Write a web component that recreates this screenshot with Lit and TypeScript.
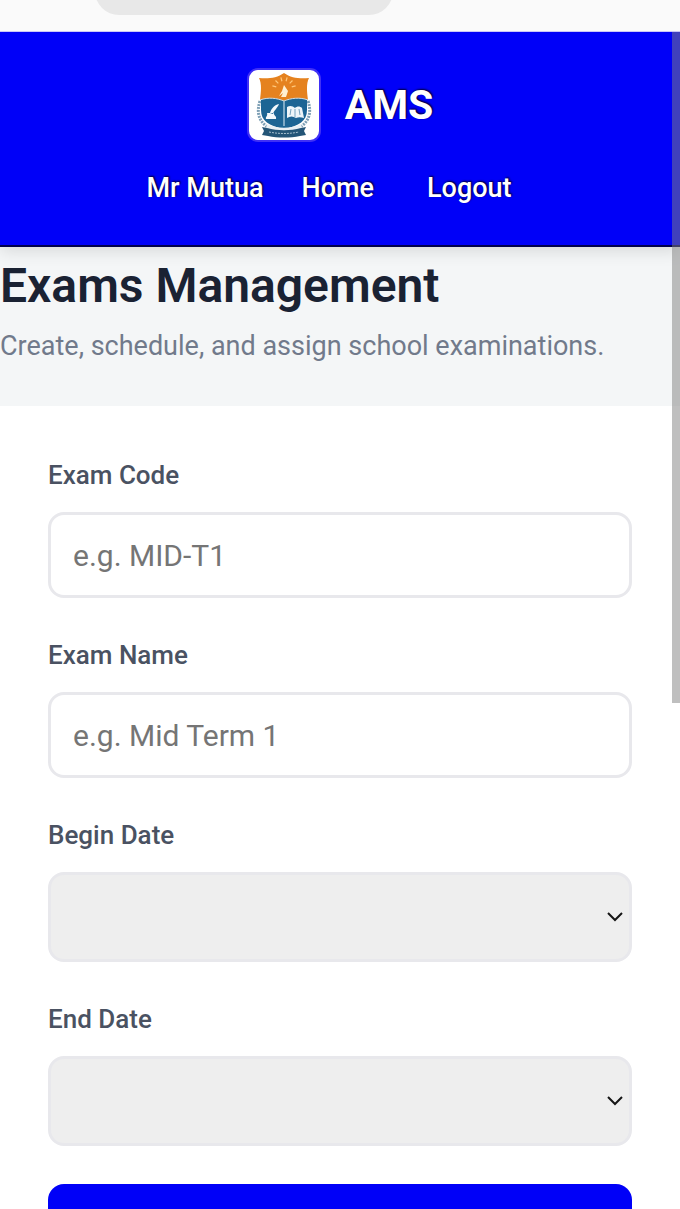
import { css, html, LitElement, svg } from 'lit';

const fields = [
  { id: 'exam-code', label: 'Exam Code', kind: 'text', placeholder: 'e.g. MID-T1' },
  { id: 'exam-name', label: 'Exam Name', kind: 'text', placeholder: 'e.g. Mid Term 1' },
  { id: 'begin-date', label: 'Begin Date', kind: 'date', placeholder: '' },
  { id: 'end-date', label: 'End Date', kind: 'date', placeholder: '' },
];

export class SchoolCrest extends LitElement {
  static styles = css`
    :host {
      display: block;
      box-sizing: border-box;
      width: 74px;
      height: 74px;
      border: 2px solid #4030f5;
      border-radius: 11px;
      background: #fff;
    }

    svg {
      display: block;
      width: 100%;
      height: 100%;
    }
  `;

  // one ray of the sun above the torch
  #ray(angle: number) {
    return svg`<path d="M35 11v-4" transform="rotate(${angle} 35 19)" stroke="#ffc77a" stroke-width="1.2" />`;
  }

  render() {
    return html`
      <svg viewBox="0 0 70 70" fill="none" role="img" aria-label="School crest">
        <path d="M11 31c-4 12-1 22 11 28M59 31c4 12 1 22-11 28" stroke="#7d9fb5" stroke-width="3" stroke-dasharray="2 1" />
        <path d="M12 28v12c0 11 8 16 23 19 15-3 23-8 23-19V28l-23-2z" fill="#1d6594" />
        <path d="M10 8c9 1 18 0 25-5 7 5 16 6 25 5-3 6-2 14-1 22-8-3-17-2-24 1-7-3-16-4-24-1 1-8 2-16-1-22z" fill="#e5821f" />
        <path d="M11 30c8-3 17-2 24 1 7-3 16-4 24-1" stroke="#c9dce8" stroke-width="1" />
        <path d="M35 31v25" stroke="#a9c8dc" stroke-width="1.4" />
        ${[-75, -45, -15, 15, 45, 75].map((angle) => this.#ray(angle))}
        <path d="M35 15l4 6-2 6h-5l2-4-4 3 3-5z" fill="#fff0d2" />
        <path d="M30 34c-5 1-8 5-9 9l3 1c1-4 4-5 6-10zM18 43h7c-1 2 3 3 2 6H17c-1-2 2-3 1-6z" fill="#f4f9fc" />
        <path d="M38 48V37c3-2 6-1 8 1 2-2 5-2 7 0l2 10c-3-1-6-1-8 0-3-2-6-2-9 0z" fill="#eef5f9" />
        <path d="M46 39v8M42 39l-1 6M50 39l1 6" stroke="#76a3bf" stroke-width="1" />
        <path d="M18 54c10 5 24 5 34 0l1 4c-11 4-25 4-36 0z" fill="#e9f0f4" />
        <path d="M13 57l5 1c11 3 23 3 34 0l5-1-2 4 2 4-6 1c-10 2-22 2-32 0l-6-1 2-4z" fill="#245577" />
        <path d="M20 62c10 2 20 2 30 0" stroke="#a7c0cf" stroke-width="1" stroke-dasharray="2 1" />
      </svg>
    `;
  }
}

customElements.define('school-crest', SchoolCrest);

export class AppRoot extends LitElement {
  static styles = css`
    :host {
      display: flex;
      flex-direction: column;
      position: relative;
      height: 100vh;
      overflow: hidden;
      background: #fff;
      font-family: Roboto, 'Liberation Sans', sans-serif;
    }

    *,
    *::before,
    *::after {
      box-sizing: border-box;
    }

    .browser-bar {
      display: flex;
      flex: none;
      align-items: flex-end;
      height: 32px;
      padding: 0 0 16px 14%;
      border-bottom: 1px solid #c9c5f7;
      background: #fafafa;
    }

    .address {
      flex: none;
      width: 51%;
      height: 48px;
      border-radius: 24px;
      background: #e8e8e8;
    }

    .page {
      position: relative;
      flex: 1;
      min-height: 0;
      overflow: hidden;
    }

    .scroll-thumb {
      position: absolute;
      top: 0;
      right: 0;
      z-index: 2;
      width: 8px;
      height: 57%;
      background: rgb(128 128 128 / 50%);
    }

    .header {
      display: flex;
      flex-direction: column;
      align-items: center;
      gap: 26px;
      position: relative;
      padding: 36px 16px 37px;
      border-bottom: 2px solid #00004d;
      background: #0000f8;
      box-shadow: 0 4px 16px rgb(0 0 0 / 12%);
      color: #fff;
      text-shadow: 1px -1px 2px rgb(0 0 0 / 80%);
    }

    .brand {
      display: flex;
      align-items: center;
      gap: 24px;
      font-size: 41px;
      font-weight: 700;
      line-height: 48px;
    }

    .nav {
      display: flex;
      gap: 38px;
      font-size: 27px;
      font-weight: 500;
      line-height: 40px;
    }

    .nav a {
      color: inherit;
      text-decoration: none;
    }

    .logout {
      padding: 0 22px 0 15px;
    }

    .intro {
      padding: 10px 0 41px;
      background: #f4f6f7;
    }

    h1 {
      margin: 0;
      color: #1a2233;
      font-size: 48px;
      font-weight: 600;
      line-height: 58px;
    }

    .intro p {
      margin: 12px 0 0;
      color: #717a8b;
      font-size: 27px;
      line-height: 38px;
    }

    .form {
      display: grid;
      gap: 38px;
      padding: 50px 48px;
    }

    .field {
      display: grid;
      gap: 18px;
    }

    label {
      color: #4a5262;
      font-size: 26px;
      font-weight: 500;
      line-height: 38px;
    }

    input,
    select {
      width: 100%;
      border: 3px solid #e8e8ec;
      border-radius: 16px;
      font: inherit;
      font-size: 30px;
    }

    input {
      height: 86px;
      padding: 0 22px;
      background: #fff;
    }

    input::placeholder {
      color: #757575;
      opacity: 1;
    }

    .picker {
      display: grid;
      align-items: center;
    }

    .picker > * {
      grid-area: 1 / 1;
    }

    select {
      height: 90px;
      padding: 0 48px 0 22px;
      appearance: none;
      background: #eee;
    }

    .chevron {
      justify-self: end;
      width: 18px;
      height: 12px;
      margin-right: 8px;
      pointer-events: none;
    }

    .submit {
      height: 86px;
      border: 0;
      border-radius: 16px;
      background: #0000f8;
    }
  `;

  #renderControl(field: (typeof fields)[number]) {
    if (field.kind === 'text') {
      return html`<input id=${field.id} type="text" placeholder=${field.placeholder} />`;
    }

    return html`
      <div class="picker">
        <select id=${field.id}></select>
        <svg class="chevron" viewBox="0 0 18 12" fill="none" aria-hidden="true">
          <path d="M2 2l7 7 7-7" stroke="#151515" stroke-width="2" />
        </svg>
      </div>
    `;
  }

  render() {
    return html`
      <div class="browser-bar"><div class="address"></div></div>
      <div class="page">
        <div class="scroll-thumb"></div>
        <header class="header">
          <div class="brand">
            <school-crest></school-crest>
            <span>AMS</span>
          </div>
          <nav class="nav">
            <span>Mr Mutua</span>
            <a href="#home">Home</a>
            <a class="logout" href="#logout">Logout</a>
          </nav>
        </header>
        <main>
          <section class="intro">
            <h1>Exams Management</h1>
            <p>Create, schedule, and assign school examinations.</p>
          </section>
          <form class="form">
            ${fields.map(
              (field) => html`
                <div class="field">
                  <label for=${field.id}>${field.label}</label>
                  ${this.#renderControl(field)}
                </div>
              `,
            )}
            <button class="submit" type="button" aria-label="Save exam"></button>
          </form>
        </main>
      </div>
    `;
  }
}

customElements.define('app-root', AppRoot);
